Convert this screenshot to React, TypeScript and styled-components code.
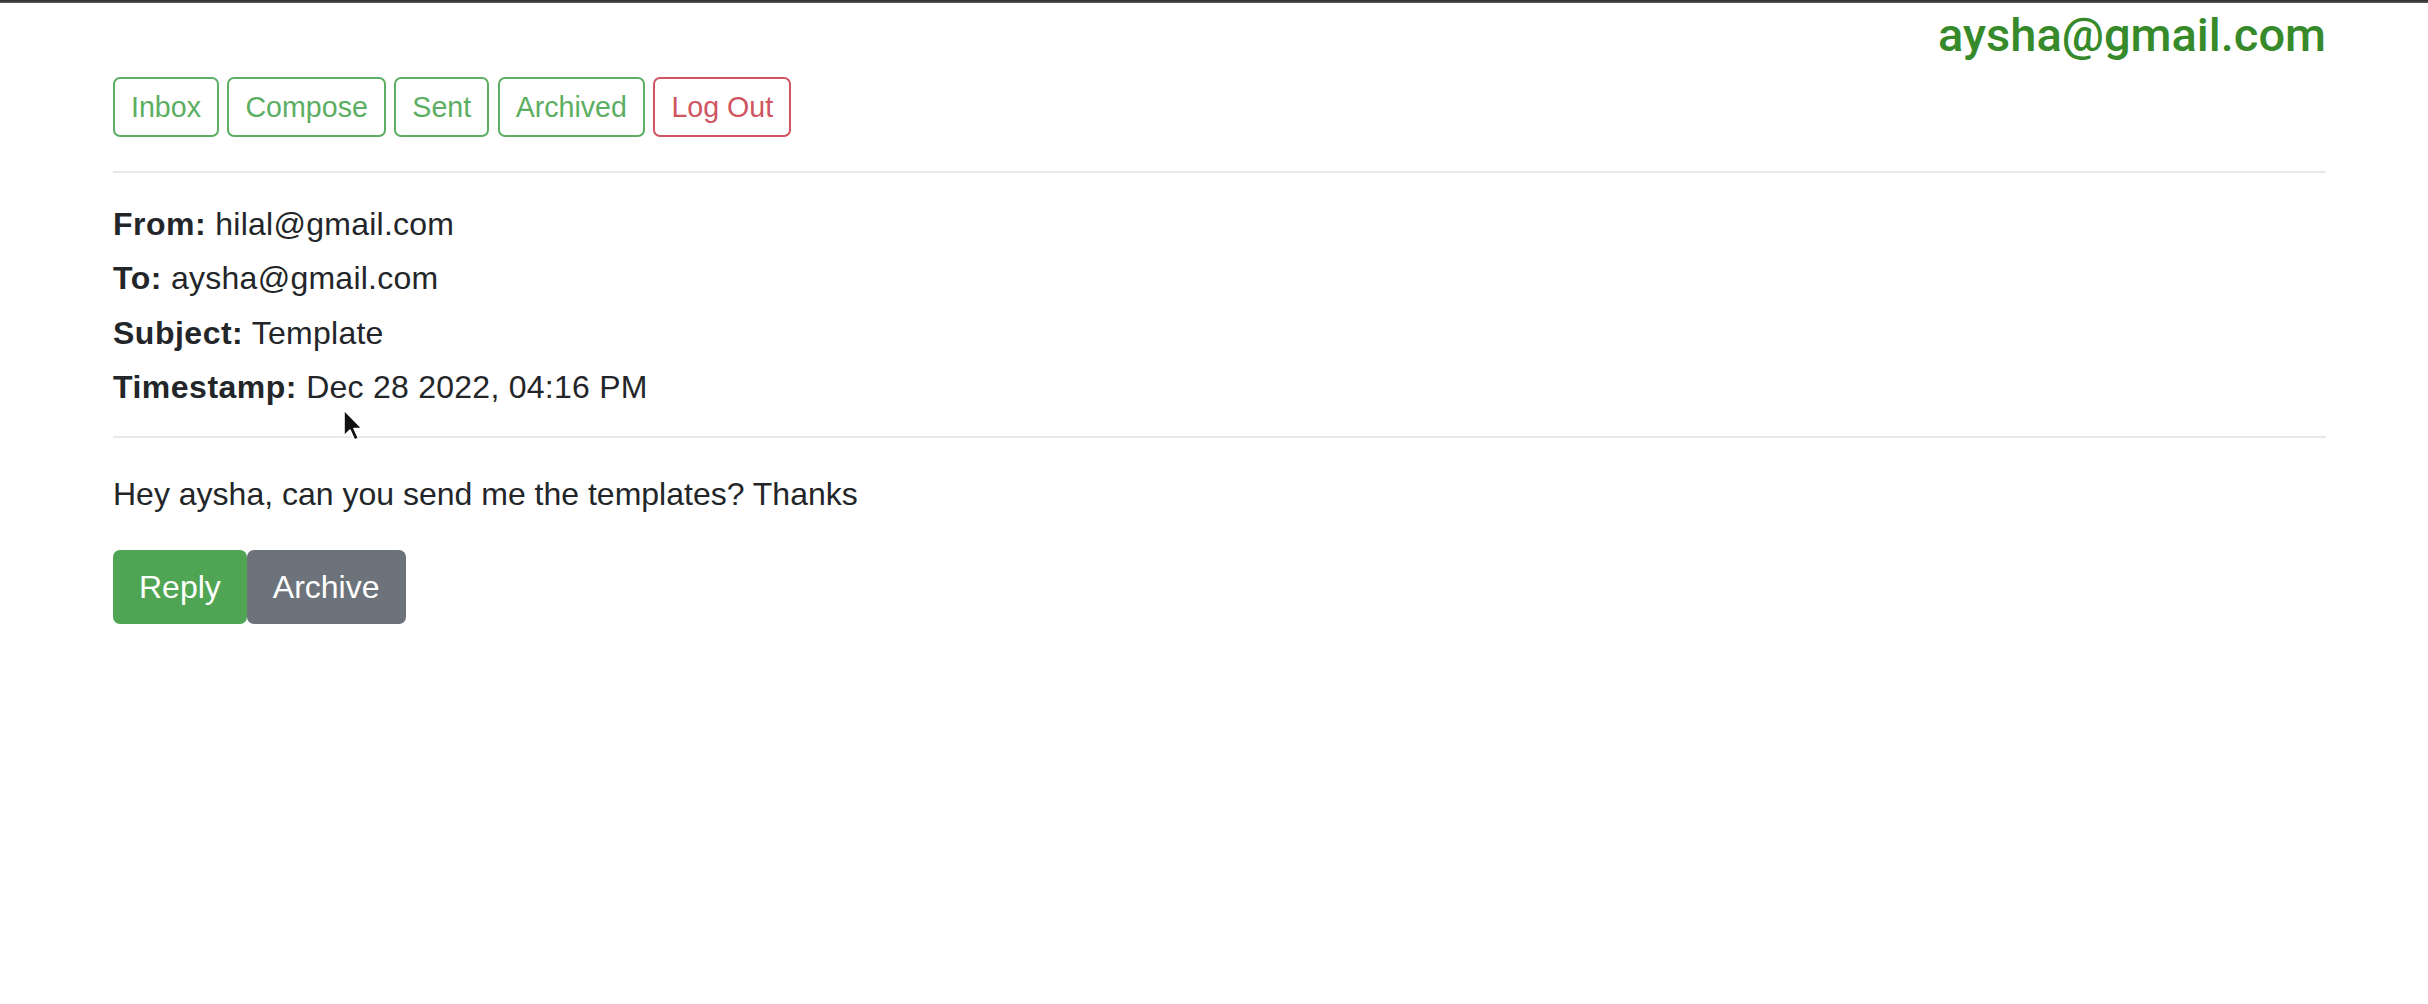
import React from "react";
import styled, { createGlobalStyle } from "styled-components";

const GlobalStyle = createGlobalStyle`
  html, body {
    margin: 0;
    padding: 0;
    background: #ffffff;
  }
  body {
    font-family: "Liberation Sans", Arial, sans-serif;
    color: #232629;
  }
`;

const TopBar = styled.div`
  height: 3px;
  background: linear-gradient(#2a2a2a, #5a5a5a);
`;

const Container = styled.main`
  position: relative;
  padding: 0 102px 0 113px;
`;

const Header = styled.header`
  display: flex;
  justify-content: flex-end;
  padding-top: 6px;
`;

const UserEmail = styled.h3`
  margin: 0;
  font-family: Roboto, "Liberation Sans", sans-serif;
  font-weight: 500;
  font-size: 47px;
  line-height: 52px;
  color: #368a2a;
`;

const Nav = styled.nav`
  display: flex;
  gap: 8.5px;
  margin-top: 16px;
`;

const navColors = {
  success: "#5cae62",
  danger: "#cf5560",
};

const NavButton = styled.button<{ $variant: "success" | "danger" }>`
  font-family: "Liberation Sans", Arial, sans-serif;
  font-size: 28.6px;
  line-height: 40px;
  padding: 8px 16px;
  background: #ffffff;
  border: 2px solid ${(p) => navColors[p.$variant]};
  color: ${(p) => navColors[p.$variant]};
  border-radius: 7px;
  cursor: pointer;
`;

const Divider = styled.hr<{ $top: number }>`
  border: 0;
  height: 2px;
  margin: ${(p) => p.$top}px 0 0;
  background: #e8e8e8;
`;

const Meta = styled.div`
  margin-top: 24px;
`;

const MetaRow = styled.div`
  font-size: 32px;
  line-height: 54.3px;
  letter-spacing: 0.25px;
  color: #232629;
`;

const Label = styled.strong`
  font-weight: 700;
  letter-spacing: 0.5px;
`;

const Body = styled.p`
  margin: 33px 0 0;
  font-size: 32px;
  line-height: 46.5px;
  color: #232629;
`;

const Actions = styled.div`
  display: flex;
  margin-top: 32px;
`;

const actionColors = {
  success: "#4fa553",
  secondary: "#6c737b",
};

const ActionButton = styled.button<{ $variant: "success" | "secondary" }>`
  font-family: "Liberation Sans", Arial, sans-serif;
  font-size: 32px;
  line-height: 46.5px;
  padding: 12px 24px;
  color: #ffffff;
  border: 2px solid ${(p) => actionColors[p.$variant]};
  background: ${(p) => actionColors[p.$variant]};
  border-radius: 7px;
  cursor: pointer;
`;

const Cursor = styled.svg`
  position: absolute;
  left: 342px;
  top: 406px;
  width: 22px;
  height: 34px;
  pointer-events: none;
`;

export default function App() {
  return (
    <>
      <GlobalStyle />
      <TopBar />
      <Container>
        <Header>
          <UserEmail>aysha@gmail.com</UserEmail>
        </Header>
        <Nav>
          <NavButton $variant="success">Inbox</NavButton>
          <NavButton $variant="success">Compose</NavButton>
          <NavButton $variant="success">Sent</NavButton>
          <NavButton $variant="success">Archived</NavButton>
          <NavButton $variant="danger">Log Out</NavButton>
        </Nav>
        <Divider $top={34} />
        <Meta>
          <MetaRow>
            <Label>From:</Label> hilal@gmail.com
          </MetaRow>
          <MetaRow>
            <Label>To:</Label> aysha@gmail.com
          </MetaRow>
          <MetaRow>
            <Label>Subject:</Label> Template
          </MetaRow>
          <MetaRow>
            <Label>Timestamp:</Label> Dec 28 2022, 04:16 PM
          </MetaRow>
        </Meta>
        <Divider $top={22} />
        <Body>Hey aysha, can you send me the templates? Thanks</Body>
        <Actions>
          <ActionButton $variant="success">Reply</ActionButton>
          <ActionButton $variant="secondary">Archive</ActionButton>
        </Actions>
        <Cursor viewBox="0 0 22 34">
          <path
            d="M2 1 L2 27 L8 21 L12.5 31 L16.5 29.2 L12 19.5 L20 19.5 Z"
            fill="#111"
            stroke="#fff"
            strokeWidth="1.6"
            strokeLinejoin="round"
          />
        </Cursor>
      </Container>
    </>
  );
}
